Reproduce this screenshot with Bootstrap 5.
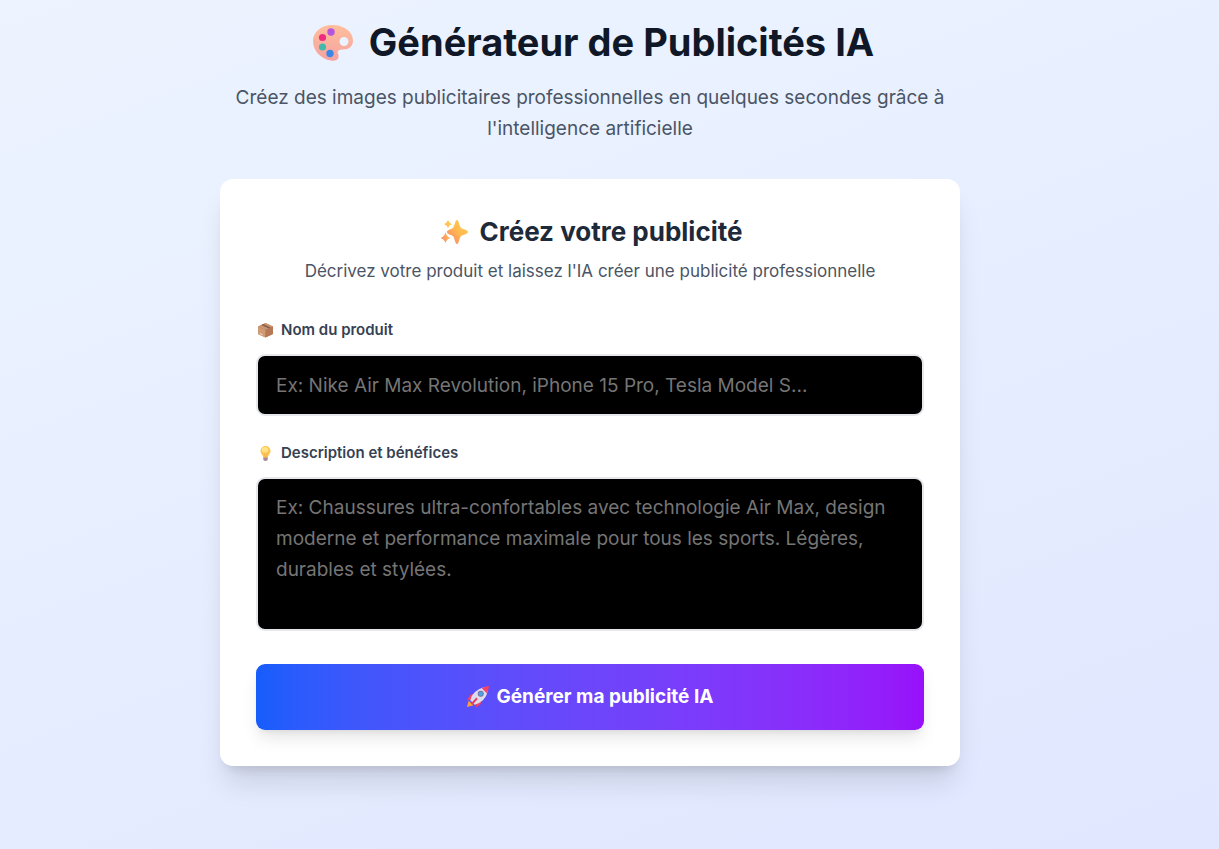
<!DOCTYPE html>
<html lang="fr">
<head>
<meta charset="utf-8">
<meta name="viewport" content="width=device-width, initial-scale=1">
<title>Générateur de Publicités IA</title>
<link href="https://cdn.jsdelivr.net/npm/bootstrap@5.3.0/dist/css/bootstrap.min.css" rel="stylesheet">
<style>
body{font-family:Inter,"Liberation Sans",sans-serif;background:linear-gradient(160deg,#edf4ff,#e0e7ff);min-height:100vh;padding:20px 39px 83px 0;color:#4a5565}
.ad-page{max-width:740px}
.ad-title{font-size:38px;line-height:44px;font-weight:700;color:#101828;margin-bottom:18px}
.ad-lead{font-size:19px;line-height:31px;margin-bottom:35px}
.ad-card{border-radius:13px;padding:36px;box-shadow:0 22px 28px -6px rgba(0,0,0,.12),0 9px 11px -7px rgba(0,0,0,.12)}
.ad-card h2{font-size:26px;line-height:34px;font-weight:700;color:#1e2939;margin-bottom:8px}
.ad-intro{font-size:17px;line-height:28px;margin-bottom:34px}
.ad-label{font-size:15px;line-height:22px;font-weight:600;color:#364153;margin-bottom:13px;padding-left:2px}
.ad-field,.ad-field:focus{font-size:19px;line-height:31px;padding:13px 18px;border:2px solid #e5e7eb;border-radius:9px;background:#000;color:#fff;resize:none}
.ad-field::placeholder{color:#757575;opacity:1}
input.ad-field{height:62px;margin-bottom:26px}
textarea.ad-field{height:154px;margin-bottom:33px}
.ad-submit,.ad-submit:hover{font-size:19px;line-height:30px;font-weight:700;color:#fff;padding:18px;border:0;border-radius:9px;background:linear-gradient(to right in oklab,#155dfc,#9810fa);box-shadow:0 11px 17px -3px rgba(0,0,0,.1),0 4px 7px -4px rgba(0,0,0,.1)}
.emo{flex:none;width:15px;height:15px}
.ad-title .emo{width:40px;height:40px;margin-left:7px}
.ad-card h2 .emo{width:27px;height:27px;margin:0 3px 0 4px}
.ad-submit .emo{width:22px;height:22px}
</style>
</head>
<body>
<main class="ad-page mx-auto">
<header class="text-center">
<h1 class="ad-title d-flex justify-content-center align-items-center gap-3">
<svg class="emo" viewBox="0 0 40 40" aria-hidden="true"><defs><linearGradient id="pal" x2="0" y2="1"><stop stop-color="#ffbf9c"/><stop offset="1" stop-color="#f5a2a0"/></linearGradient></defs><path d="M19 3C8 3 0 10 0 19c0 10 8 18 18 19.500 6 1 9-2 7-7-1-3 1-4 5-4 6 0 10-3 10-9C40 9 30 3 19 3Zm12 12a4.400 4.400 0 1 1 0 9 4.400 4.400 0 0 1 0-9Z" fill="url(#pal)" fill-rule="evenodd"/><circle cx="18" cy="10" r="3.700" fill="#b454df"/><circle cx="9.500" cy="15.500" r="3.600" fill="#f02c81"/><circle cx="9.500" cy="25" r="3.600" fill="#43b9ae"/><circle cx="17" cy="31.500" r="3.700" fill="#3b87e6"/></svg>
<span>Générateur de Publicités IA</span></h1>
<p class="ad-lead">Créez des images publicitaires professionnelles en quelques secondes grâce à l'intelligence artificielle</p>
</header>
<section class="ad-card bg-white">
<h2 class="d-flex justify-content-center align-items-center gap-2">
<svg class="emo" viewBox="0 0 27 27" aria-hidden="true"><defs><linearGradient id="star" x1="1" x2="0" y2="1"><stop stop-color="#ffd34f"/><stop offset=".5" stop-color="#ffb84f"/><stop offset="1" stop-color="#f87978"/></linearGradient></defs><g fill="url(#star)"><path d="M16 1c2 0 2.300 7 4.500 8.300C22.500 10.500 27 11 27 13s-4.500 2.500-6.500 3.700C18.300 18 18 25 16 25s-2.300-7-4.500-8.300C9.500 15.500 6 15 6 13s3.500-2.500 5.500-3.700C13.700 8 14 1 16 1Z"/><path d="M7 1q1 3 4 4-3 1-4 4-1-3-4-4 3-1 4-4ZM4.500 13q1 5 5 6-4 1-5 5-1-4-5-5 4-1 5-6Z"/></g></svg>
<span>Créez votre publicité</span></h2>
<p class="ad-intro text-center">Décrivez votre produit et laissez l'IA créer une publicité professionnelle</p>
<form onsubmit="return false">
<label class="ad-label d-flex align-items-center gap-2" for="product">
<svg class="emo" viewBox="0 0 15 15" aria-hidden="true"><path d="M7.500 0 15 3.500V11l-7.500 3.500L0 11V3.500Z" fill="#b77b5a"/><path d="M7.500 0 15 3.500 7.500 7 0 3.500Z" fill="#c9956f"/><path d="M0 3.500 7.500 7v7.500L0 11Z" fill="#d09a74"/><path d="M7.500 7 15 3.500V11l-7.500 3.500Z" fill="#b67855"/><path d="m3.500 2 7.500 3.500 1.500-1L5 1Z" fill="#855b4b"/><path d="m2 10 2.500 1.200v1L2 11Z" fill="#f3ded0"/></svg>
<span>Nom du produit</span></label>
<input class="ad-field form-control" type="text" id="product" placeholder="Ex: Nike Air Max Revolution, iPhone 15 Pro, Tesla Model S...">
<label class="ad-label d-flex align-items-center gap-2" for="details">
<svg class="emo" viewBox="0 0 15 15" aria-hidden="true"><path d="M5.300 10h4.400v4q-2.200 2-4.400 0Z" fill="#a58b9b"/><path d="M7.500 0a5 5 0 0 0-5 5c0 3 2.500 3.500 2.700 6.500h4.600C10 8.500 12.500 8 12.500 5a5 5 0 0 0-5-5Z" fill="#ffc34e"/><ellipse cx="7" cy="4" rx="3.200" ry="3" fill="#ffe58a"/><path d="M6 5.500 7 11h1l1-5.500" fill="none" stroke="#f5b04a" stroke-width=".6"/></svg>
<span>Description et bénéfices</span></label>
<textarea class="ad-field form-control" id="details" placeholder="Ex: Chaussures ultra-confortables avec technologie Air Max, design moderne et performance maximale pour tous les sports. Légères, durables et stylées."></textarea>
<button class="ad-submit btn w-100 d-flex justify-content-center align-items-center gap-2" type="submit">
<svg class="emo" viewBox="0 0 20 20" aria-hidden="true"><path d="m0 19 1.500-5.500L6 17.500Z" fill="#ff9e32"/><path d="M8 7 3 8 0 13l5-.5ZM13 12l-.5 4.500L8 19.500l.5-5Z" fill="#ef4167"/><path d="M3 13Q5 4 16 1l3 3q-2 10-12 13Z" fill="#dedbea"/><path d="M13.500 2Q17 0 20 0q0 3-2 6.500Z" fill="#f34069"/><circle cx="12.500" cy="7" r="2.700" fill="#7668aa"/><circle cx="12.500" cy="7" r="2" fill="#4aa5df"/><path d="m3.500 16 5-5.500 1.300 1.300L5 17Z" fill="#e43c64"/></svg>
<span>Générer ma publicité IA</span></button>
</form>
</section>
</main>
<script src="https://cdn.jsdelivr.net/npm/bootstrap@5.3.0/dist/js/bootstrap.bundle.min.js"></script>
</body>
</html>
